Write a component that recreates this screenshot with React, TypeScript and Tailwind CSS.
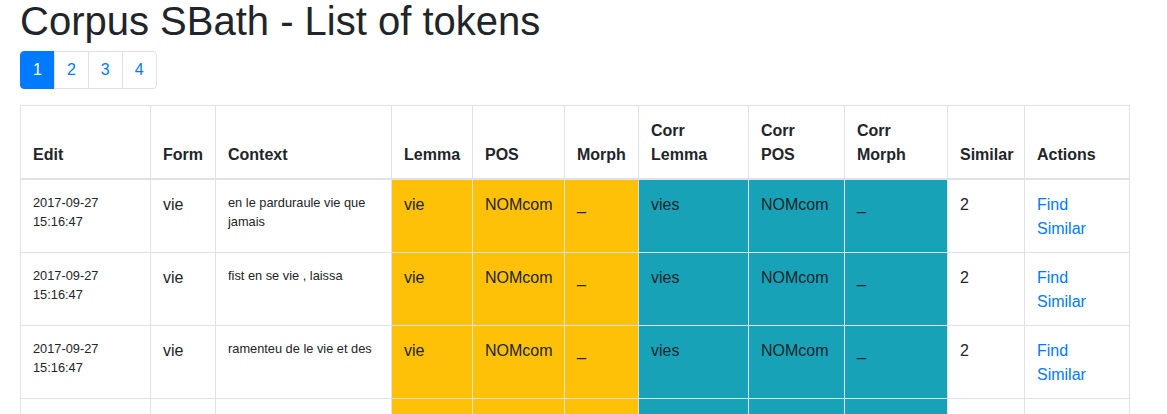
import React from "react";

type Token = {
  edit: string[];
  form: string;
  context: string;
  lemma: string;
  pos: string;
  morph: string;
  corrLemma: string;
  corrPos: string;
  corrMorph: string;
  similar: number;
};

const tokens: Token[] = [
  {
    edit: ["2017-09-27", "15:16:47"],
    form: "vie",
    context: "en le parduraule vie que jamais",
    lemma: "vie",
    pos: "NOMcom",
    morph: "_",
    corrLemma: "vies",
    corrPos: "NOMcom",
    corrMorph: "_",
    similar: 2,
  },
  {
    edit: ["2017-09-27", "15:16:47"],
    form: "vie",
    context: "fist en se vie , laissa",
    lemma: "vie",
    pos: "NOMcom",
    morph: "_",
    corrLemma: "vies",
    corrPos: "NOMcom",
    corrMorph: "_",
    similar: 2,
  },
  {
    edit: ["2017-09-27", "15:16:47"],
    form: "vie",
    context: "ramenteu de le vie et des",
    lemma: "vie",
    pos: "NOMcom",
    morph: "_",
    corrLemma: "vies",
    corrPos: "NOMcom",
    corrMorph: "_",
    similar: 2,
  },
  {
    edit: ["2017-09-27", "15:16:47"],
    form: "vie",
    context: "de le vie et de",
    lemma: "vie",
    pos: "NOMcom",
    morph: "_",
    corrLemma: "vies",
    corrPos: "NOMcom",
    corrMorph: "_",
    similar: 2,
  },
];

const widths = [
  "w-[130px]",
  "w-[65px]",
  "w-[176px]",
  "w-[81px]",
  "w-[92px]",
  "w-[74px]",
  "w-[110px]",
  "w-[96px]",
  "w-[103px]",
  "w-[77px]",
  "w-[105px]",
];

const headers = [
  "Edit",
  "Form",
  "Context",
  "Lemma",
  "POS",
  "Morph",
  "Corr Lemma",
  "Corr POS",
  "Corr Morph",
  "Similar",
  "Actions",
];

const cell = "px-3 pt-[13px] pb-[11px] align-top border border-[#dee2e6]";
const warn = `${cell} bg-[#ffc107]`;
const info = `${cell} bg-[#17a2b8]`;

export default function App() {
  return (
    <main
      className="px-5 text-[#212529] text-base leading-6"
      style={{ fontFamily: '"Liberation Sans", Arial, sans-serif' }}
    >
      <h1 className="text-[40px] leading-[43px] font-normal mb-2">
        Corpus SBath - List of tokens
      </h1>

      <ul className="flex mb-4">
        {[1, 2, 3, 4].map((n, i) => (
          <li key={n}>
            <a
              href="#"
              className={
                "block px-3 py-2 leading-5 border " +
                (i > 0 ? "-ml-px " : "") +
                (i === 0 ? "rounded-l " : "") +
                (i === 3 ? "rounded-r " : "") +
                (n === 1
                  ? "bg-[#007bff] border-[#007bff] text-white"
                  : "bg-white border-[#dee2e6] text-[#007bff]")
              }
            >
              {n}
            </a>
          </li>
        ))}
      </ul>

      <table className="w-[1109px] table-fixed border-collapse">
        <colgroup>
          {widths.map((w, i) => (
            <col key={i} className={w} />
          ))}
        </colgroup>
        <thead>
          <tr>
            {headers.map((h) => (
              <th
                key={h}
                className="px-3 pt-[13px] pb-[11px] align-bottom text-left font-bold border border-[#dee2e6] border-b-2"
              >
                {h}
              </th>
            ))}
          </tr>
        </thead>
        <tbody>
          {tokens.map((t, i) => (
            <tr key={i}>
              <td className={cell}>
                <small className="text-[12.8px] leading-[19.2px] block">
                  {t.edit[0]}
                  <br />
                  {t.edit[1]}
                </small>
              </td>
              <td className={cell}>{t.form}</td>
              <td className={cell}>
                <small className="text-[12.8px] leading-[19.2px] block">
                  {t.context}
                </small>
              </td>
              <td className={warn}>{t.lemma}</td>
              <td className={warn}>{t.pos}</td>
              <td className={warn}>{t.morph}</td>
              <td className={info}>{t.corrLemma}</td>
              <td className={info}>{t.corrPos}</td>
              <td className={info}>{t.corrMorph}</td>
              <td className={cell}>{t.similar}</td>
              <td className={cell}>
                <a href="#" className="text-[#007bff]">
                  Find Similar
                </a>
              </td>
            </tr>
          ))}
        </tbody>
      </table>
    </main>
  );
}
